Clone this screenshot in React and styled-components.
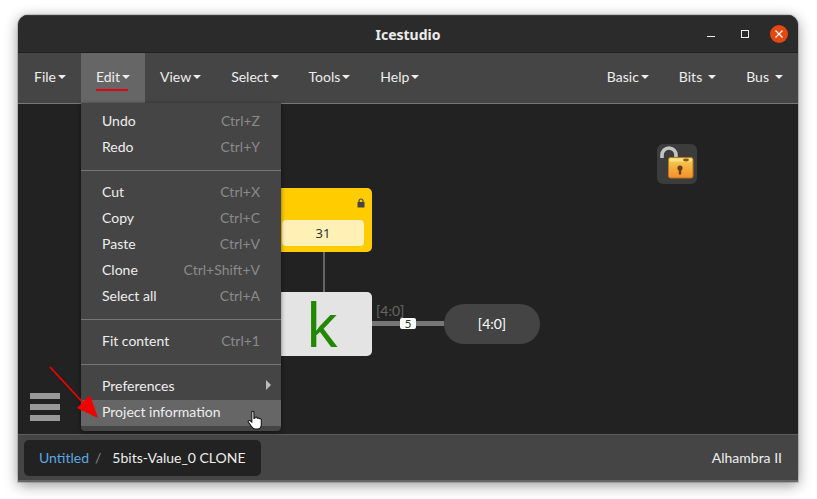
import React from 'react';
import styled, { createGlobalStyle } from 'styled-components';

const GlobalStyle = createGlobalStyle`
  html, body {
    margin: 0;
    padding: 0;
    width: 817px;
    height: 499px;
    overflow: hidden;
    background: #fff;
    font-family: "Lato", "Liberation Sans", sans-serif;
  }
`;

const Page = styled.div`
  width: 817px;
  height: 499px;
  box-sizing: border-box;
  padding: 15px 19px 17px 18px;
`;

const Window = styled.div`
  position: relative;
  height: 100%;
  display: flex;
  flex-direction: column;
  border-radius: 10px 10px 0 0;
  overflow: hidden;
  background: #222;
  box-shadow: 0 3px 14px rgba(0, 0, 0, 0.42), 0 0 0 1px rgba(0, 0, 0, 0.15);
`;

const TitleBar = styled.div`
  position: relative;
  flex: 0 0 38px;
  box-sizing: border-box;
  display: flex;
  align-items: center;
  justify-content: center;
  background: #2b2b2b;
  border-top: 1px solid #3c3c3c;
  border-bottom: 1px solid #1f1f1f;
  color: #ececec;
  font: 700 14px "Noto Sans", sans-serif;
`;

const WindowButtons = styled.div`
  position: absolute;
  right: 10px;
  top: 9px;
  display: flex;
  align-items: center;
  gap: 16px;
`;

const WinButton = styled.div`
  width: 18px;
  height: 18px;
  display: flex;
  align-items: center;
  justify-content: center;
  border-radius: 50%;
  background: ${(p) => (p.$close ? '#e2480f' : 'transparent')};
`;

const MenuBar = styled.div`
  flex: 0 0 51px;
  box-sizing: border-box;
  display: flex;
  justify-content: space-between;
  background: #454545;
  border-bottom: 1px solid #777;
`;

const MenuGroup = styled.div`
  display: flex;
`;

const MenuTab = styled.div`
  position: relative;
  display: flex;
  align-items: center;
  height: 50px;
  box-sizing: border-box;
  padding: 0 15px 4px;
  color: #eee;
  font-size: 14px;
  background: ${(p) => (p.$active ? '#666' : 'transparent')};

  &:first-child {
    padding-left: ${(p) => (p.$right ? 15 : 16)}px;
  }
`;

const Caret = styled.span`
  display: inline-block;
  margin-left: ${(p) => p.$gap ?? 2}px;
  margin-top: 1px;
  width: 0;
  height: 0;
  border-left: 4px solid transparent;
  border-right: 4px solid transparent;
  border-top: 4px solid #eee;
`;

const Underline = styled.div`
  position: absolute;
  left: 15px;
  bottom: 12px;
  width: 32px;
  height: 2px;
  background: #e8000d;
`;

const Canvas = styled.div`
  position: relative;
  flex: 1;
  background: #222;
`;

const Footer = styled.div`
  flex: 0 0 48px;
  box-sizing: border-box;
  display: flex;
  align-items: center;
  justify-content: space-between;
  padding: 0 16px 0 6px;
  background: #454545;
  border-top: 1px solid #5c5c5c;
  border-bottom: 2px solid #666;
`;

const Breadcrumb = styled.div`
  display: flex;
  align-items: center;
  width: 237px;
  height: 36px;
  box-sizing: border-box;
  padding-left: 15px;
  background: #222;
  border-radius: 5px;
  font-size: 14px;
  white-space: nowrap;
`;

const Crumb = styled.span`
  color: #5ba8e0;
`;

const Slash = styled.span`
  color: #888;
  margin: 0 11px 0 6px;
`;

const CrumbCurrent = styled.span`
  color: #eee;
`;

const Board = styled.span`
  color: #eee;
  font-size: 14px;
`;

const LockButton = styled.div`
  position: absolute;
  left: 639px;
  top: 40px;
  width: 40px;
  height: 40px;
  border-radius: 6px;
  background: #3c3c3c;
`;

const ConstantBlock = styled.div`
  position: absolute;
  left: 240px;
  top: 84px;
  width: 114px;
  height: 64px;
  border-radius: 5px;
  background: #ffcc00;
`;

const ConstantValue = styled.div`
  position: absolute;
  left: 24px;
  top: 32px;
  width: 82px;
  height: 26px;
  border-radius: 4px;
  background: #fff1b5;
  color: #333;
  font-size: 13px;
  font-family: "Noto Sans", sans-serif;
  display: flex;
  align-items: center;
  justify-content: center;
`;

const BlockLock = styled.svg`
  position: absolute;
  right: 7px;
  top: 10px;
`;

const CodeBlock = styled.div`
  position: absolute;
  left: 240px;
  top: 188px;
  width: 114px;
  height: 64px;
  border-radius: 5px;
  background: #e4e4e4;
  color: #228800;
  font: 400 60px "Noto Sans", sans-serif;
  display: flex;
  align-items: center;
  justify-content: center;
  padding-left: 14px;
  box-sizing: border-box;
  line-height: 64px;
`;

const VerticalWire = styled.div`
  position: absolute;
  left: 305px;
  top: 148px;
  width: 2px;
  height: 40px;
  background: #666;
`;

const BusWire = styled.div`
  position: absolute;
  left: 354px;
  top: 217px;
  width: 72px;
  height: 5px;
  background: #777;
`;

const BusSize = styled.div`
  position: absolute;
  left: 382px;
  top: 214px;
  width: 16px;
  height: 11px;
  border-radius: 2px;
  background: #fff;
  color: #333;
  font-size: 12px;
  line-height: 11px;
  text-align: center;
`;

const BusLabel = styled.div`
  position: absolute;
  left: 358px;
  top: 198px;
  color: #666;
  font-size: 14px;
`;

const OutputPin = styled.div`
  position: absolute;
  left: 426px;
  top: 200px;
  width: 96px;
  height: 40px;
  box-sizing: border-box;
  padding-bottom: 2px;
  border-radius: 20px;
  background: #444;
  color: #fff;
  font-size: 14px;
  display: flex;
  align-items: center;
  justify-content: center;
`;

const Hamburger = styled.div`
  position: absolute;
  left: 12px;
  top: 289px;
  width: 30px;
  display: flex;
  flex-direction: column;
  gap: 5px;
`;

const HamburgerBar = styled.div`
  height: 6px;
  background: #999;
`;

const Dropdown = styled.div`
  position: absolute;
  left: 63px;
  top: -1px;
  width: 200px;
  box-sizing: border-box;
  padding: 4px 0 5px;
  background: #454545;
  border-radius: 0 0 4px 4px;
  box-shadow: 0 1px 4px rgba(0, 0, 0, 0.5);
`;

const Item = styled.div`
  position: relative;
  display: flex;
  align-items: center;
  justify-content: space-between;
  height: 26px;
  box-sizing: border-box;
  padding: 0 21px ${(p) => (p.$hover ? 3 : 0)}px;
  color: #eee;
  font-size: 14px;
  background: ${(p) => (p.$hover ? '#666' : 'transparent')};
  margin-top: ${(p) => (p.$hover ? 2 : 0)}px;
`;

const Shortcut = styled.span`
  color: #8a8a8a;
  font-size: 14px;
`;

const SubArrow = styled.span`
  position: absolute;
  right: 10px;
  top: 8px;
  width: 0;
  height: 0;
  border-top: 5px solid transparent;
  border-bottom: 5px solid transparent;
  border-left: 5px solid #bbb;
`;

const Divider = styled.div`
  height: 1px;
  margin: 11px 0 7px;
  background: #777;
`;

const ArrowOverlay = styled.svg`
  position: absolute;
  left: 28px;
  top: 260px;
`;

const HandCursor = styled.svg`
  position: absolute;
  left: 229px;
  top: 306px;
`;

const leftMenus = ['File', 'Edit', 'View', 'Select', 'Tools', 'Help'];
const rightMenus = ['Basic', 'Bits', 'Bus'];

const editGroups = [
  [['Undo', 'Ctrl+Z'], ['Redo', 'Ctrl+Y']],
  [['Cut', 'Ctrl+X'], ['Copy', 'Ctrl+C'], ['Paste', 'Ctrl+V'], ['Clone', 'Ctrl+Shift+V'], ['Select all', 'Ctrl+A']],
  [['Fit content', 'Ctrl+1']],
];

const LockIcon = () => (
  <svg width="40" height="40" viewBox="0 0 40 40">
    <defs>
      <linearGradient id="lockBody" x1="0" y1="0" x2="0" y2="1">
        <stop offset="0" stopColor="#f6d55a" />
        <stop offset="0.45" stopColor="#f3b33f" />
        <stop offset="1" stopColor="#f78f2e" />
      </linearGradient>
    </defs>
    <path d="M5 14 V11 a7 7 0 0 1 14 0 V15" fill="none" stroke="#c4c4c4" strokeWidth="3.6" />
    <rect x="11.5" y="13.5" width="24.5" height="20.5" rx="2" fill="url(#lockBody)" stroke="#b9771c" />
    <rect x="12.5" y="14.5" width="22.5" height="3" rx="1" fill="#f9e089" />
    <ellipse cx="29" cy="16" rx="3" ry="1.4" fill="#8a5a12" />
    <circle cx="23" cy="24" r="2.6" fill="#6a3d0a" />
    <rect x="21.8" y="24.5" width="2.4" height="6" fill="#6a3d0a" />
  </svg>
);

const App = () => (
  <Page>
    <GlobalStyle />
    <Window>
      <TitleBar>
        Icestudio
        <WindowButtons>
          <WinButton>
            <svg width="10" height="10" viewBox="0 0 10 10">
              <rect x="1" y="7" width="8" height="1" fill="#eee" />
            </svg>
          </WinButton>
          <WinButton>
            <svg width="10" height="10" viewBox="0 0 10 10">
              <rect x="1.5" y="1.5" width="7" height="7" fill="none" stroke="#eee" />
            </svg>
          </WinButton>
          <WinButton $close>
            <svg width="10" height="10" viewBox="0 0 10 10">
              <path d="M1.5 1.5 L8.5 8.5 M8.5 1.5 L1.5 8.5" stroke="#fff" strokeWidth="1.2" />
            </svg>
          </WinButton>
        </WindowButtons>
      </TitleBar>

      <MenuBar>
        <MenuGroup>
          {leftMenus.map((name) => (
            <MenuTab key={name} $active={name === 'Edit'}>
              {name}
              <Caret />
              {name === 'Edit' && <Underline />}
            </MenuTab>
          ))}
        </MenuGroup>
        <MenuGroup>
          {rightMenus.map((name) => (
            <MenuTab key={name} $right>
              {name}
              <Caret $gap={name === 'Basic' ? 2 : 6} />
            </MenuTab>
          ))}
        </MenuGroup>
      </MenuBar>

      <Canvas>
        <LockButton>
          <LockIcon />
        </LockButton>

        <ConstantBlock>
          <BlockLock width="8" height="10" viewBox="0 0 8 10">
            <path d="M2 4 V3 a2 2 0 0 1 4 0 V4" fill="none" stroke="#444" strokeWidth="1.2" />
            <rect x="0.5" y="4" width="7" height="5.5" rx="0.6" fill="#444" />
          </BlockLock>
          <ConstantValue>31</ConstantValue>
        </ConstantBlock>
        <VerticalWire />
        <CodeBlock>k</CodeBlock>
        <BusWire />
        <BusLabel>[4:0]</BusLabel>
        <BusSize>5</BusSize>
        <OutputPin>[4:0]</OutputPin>

        <Hamburger>
          <HamburgerBar />
          <HamburgerBar />
          <HamburgerBar />
        </Hamburger>

        <Dropdown>
          {editGroups.map((group) => (
            <React.Fragment key={group[0][0]}>
              {group.map(([label, keys]) => (
                <Item key={label}>
                  {label}
                  <Shortcut>{keys}</Shortcut>
                </Item>
              ))}
              <Divider />
            </React.Fragment>
          ))}
          <Item>
            Preferences
            <SubArrow />
          </Item>
          <Item $hover>Project information</Item>
        </Dropdown>

        <ArrowOverlay width="60" height="60" viewBox="0 0 60 60">
          <path d="M4 3 L40 42" stroke="#f00000" strokeWidth="1.8" fill="none" />
          <path d="M52 54 L31 44 L44 31 Z" fill="#f00000" />
        </ArrowOverlay>

        <HandCursor width="17" height="21" viewBox="0 0 16 20">
          <path
            d="M4.5 1.5 c1-.8 2-.3 2 1 V8 l1-.3 V7 c.8-.6 1.6-.4 2 .4 l.2.4 c.8-.5 1.6-.3 2 .5 c.8-.3 1.6 0 1.8 .9 V14 c0 2-1.3 4-3.5 4 H7.5 C6 18 5 17 4 15.5 L1.2 11.5 c-.5-1 .6-2 1.6-1.3 l1.7 1.4 Z"
            fill="#fff"
            stroke="#111"
            strokeWidth="1"
          />
        </HandCursor>
      </Canvas>

      <Footer>
        <Breadcrumb>
          <Crumb>Untitled</Crumb>
          <Slash>/</Slash>
          <CrumbCurrent>5bits-Value_0 CLONE</CrumbCurrent>
        </Breadcrumb>
        <Board>Alhambra II</Board>
      </Footer>
    </Window>
  </Page>
);

export default App;
